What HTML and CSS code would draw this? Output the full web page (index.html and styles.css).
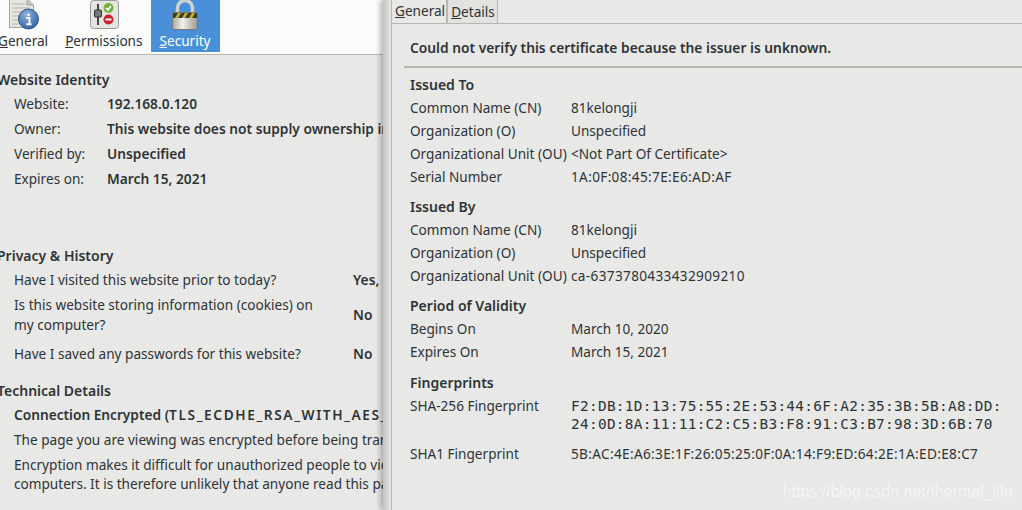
FILE: index.html
```html
<!DOCTYPE html>
<html lang="en">
<head>
    <meta charset="UTF-8">
    <title>Page Info</title>
    <link rel="stylesheet" href="styles.css">
</head>
<body>
    <div class="page-info">
        <div class="toolbar">
            <div class="tool">
                <svg class="tool-icon" viewBox="0 0 40 31" width="40" height="31">
                    <defs>
                        <radialGradient id="infoBall" cx="0.4" cy="0.3" r="0.8">
                            <stop offset="0" stop-color="#8db3e0"/>
                            <stop offset="1" stop-color="#2a5a9c"/>
                        </radialGradient>
                    </defs>
                    <path d="M6.500 -2H24L30.500 5V27.500H6.500Z" fill="#e6e6e0" stroke="#a5a5a0"/>
                    <path d="M24 -2V5H30.500" fill="#c9c9c2" stroke="#a5a5a0"/>
                    <path d="M9 4H22M9 8H27M9 12H27M9 16H20M9 20H18M9 24H16" stroke="#b5b5ae" stroke-width="1.2"/>
                    <circle cx="25.500" cy="19" r="10" fill="url(#infoBall)" stroke="#2d5487"/>
                    <path d="M25.500 13.500v2.500M23.300 18H26.500V24M23.300 24.300H28.500" stroke="#fff" stroke-width="2" fill="none"/>
                </svg>
                <span class="tool-label"><u>G</u>eneral</span>
            </div>
            <div class="tool">
                <svg class="tool-icon" viewBox="0 0 40 31" width="40" height="31">
                    <rect x="6.500" y="0.500" width="28" height="28" rx="3" fill="#e4e4e0" stroke="#9a9a96"/>
                    <path d="M14 4V25" stroke="#444" stroke-width="2"/>
                    <rect x="10.500" y="10" width="7" height="7" rx="1" fill="#777" stroke="#333"/>
                    <circle cx="24.500" cy="8" r="5" fill="#71b33c"/>
                    <path d="M22 8l2 2 3-4" stroke="#fff" stroke-width="1.6" fill="none"/>
                    <circle cx="24.500" cy="19.500" r="5" fill="#cc2030"/>
                    <path d="M21.500 19.500h6" stroke="#fff" stroke-width="2"/>
                </svg>
                <span class="tool-label"><u>P</u>ermissions</span>
            </div>
            <div class="tool tool-active">
                <svg class="tool-icon" viewBox="0 0 40 31" width="40" height="31">
                    <defs>
                        <linearGradient id="lockBody" x1="0" y1="0" x2="1" y2="0">
                            <stop offset="0" stop-color="#a8a8a0"/>
                            <stop offset="0.4" stop-color="#f2f2ec"/>
                            <stop offset="1" stop-color="#9a9a92"/>
                        </linearGradient>
                    </defs>
                    <path d="M12.500 13V8A7.500 7.500 0 0 1 27.500 8V13" fill="none" stroke="#d2d2cd" stroke-width="3.500"/>
                    <rect x="7.500" y="12.500" width="25" height="17" rx="2" fill="url(#lockBody)" stroke="#77776f"/>
                    <rect x="8" y="13" width="24" height="5" fill="#3f3c26"/>
                    <path d="M10 18l3-5h3l-3 5zM17 18l3-5h3l-3 5zM24 18l3-5h3l-3 5z" fill="#c8b13a"/>
                </svg>
                <span class="tool-label"><u>S</u>ecurity</span>
            </div>
        </div>

        <div class="sec sec-identity">
            <h3>Website Identity</h3>
            <div class="id-row"><span>Website:</span><b>192.168.0.120</b></div>
            <div class="id-row"><span>Owner:</span><b>This website does not supply ownership information.</b></div>
            <div class="id-row"><span>Verified by:</span><b>Unspecified</b></div>
            <div class="id-row"><span>Expires on:</span><b>March 15, 2021</b></div>
        </div>

        <div class="sec sec-privacy">
            <h3>Privacy &amp; History</h3>
            <div class="q-row q-first"><span>Have I visited this website prior to today?</span><b>Yes, once</b></div>
            <div class="q-row q-tall"><span>Is this website storing information (cookies) on my computer?</span><b>No</b></div>
            <div class="q-row q-last"><span>Have I saved any passwords for this website?</span><b>No</b></div>
        </div>

        <div class="sec sec-tech">
            <h3>Technical Details</h3>
            <p class="tech-head">Connection Encrypted (<span class="cipher">TLS_ECDHE_RSA_WITH_AES_128_GCM_SHA256</span>)</p>
            <p class="tech-one">The page you are viewing was encrypted before being transmitted over the Internet.</p>
            <p class="tech-two">Encryption makes it difficult for unauthorized people to view information traveling between<br>computers. It is therefore unlikely that anyone read this page as it traveled across the network.</p>
        </div>
    </div>

    <div class="cert-window">
        <div class="tabs">
            <div class="tab tab-active"><u>G</u>eneral</div>
            <div class="tab"><u>D</u>etails</div>
        </div>
        <div class="cert-panel">
            <div class="cert-warning">Could not verify this certificate because the issuer is unknown.</div>

            <h4>Issued To</h4>
            <div class="cert-row"><span>Common Name (CN)</span><span>81kelongji</span></div>
            <div class="cert-row"><span>Organization (O)</span><span>Unspecified</span></div>
            <div class="cert-row"><span>Organizational Unit (OU)</span><span>&lt;Not Part Of Certificate&gt;</span></div>
            <div class="cert-row"><span>Serial Number</span><span class="hex">1A:0F:08:45:7E:E6:AD:AF</span></div>

            <h4>Issued By</h4>
            <div class="cert-row"><span>Common Name (CN)</span><span>81kelongji</span></div>
            <div class="cert-row"><span>Organization (O)</span><span>Unspecified</span></div>
            <div class="cert-row"><span>Organizational Unit (OU)</span><span class="hex">ca-6373780433432909210</span></div>

            <h4>Period of Validity</h4>
            <div class="cert-row"><span>Begins On</span><span>March 10, 2020</span></div>
            <div class="cert-row"><span>Expires On</span><span>March 15, 2021</span></div>

            <h4 class="group-last">Fingerprints</h4>
            <div class="cert-row finger-row"><span>SHA-256 Fingerprint</span><span class="mono">F2:DB:1D:13:75:55:2E:53:44:6F:A2:35:3B:5B:A8:DD:<br>24:0D:8A:11:11:C2:C5:B3:F8:91:C3:B7:98:3D:6B:70</span></div>
            <div class="cert-row"><span>SHA1 Fingerprint</span><span class="hex">5B:AC:4E:A6:3E:1F:26:05:25:0F:0A:14:F9:ED:64:2E:1A:ED:E8:C7</span></div>
        </div>
        <div class="watermark">https://blog.csdn.net/thermal_life</div>
    </div>
</body>
</html>
```

FILE: styles.css
```css
html, body {
    margin: 0;
    padding: 0;
    height: 510px;
    overflow: hidden;
}
body {
    position: relative;
    font-family: "Noto Sans", "Open Sans", sans-serif;
    font-size: 13.6px;
    line-height: 20px;
    color: #2e3436;
    background-color: #e8e8e7;
}
.page-info {
    width: 383px;
    height: 510px;
    overflow: hidden;
}
.toolbar {
    display: flex;
    height: 54px;
    margin-left: -2px;
    background-color: #fbfbfb;
    border-bottom: 1px solid #b6b6b3;
}
.tool {
    display: flex;
    flex-direction: column;
    align-items: center;
    height: 52px;
    padding: 0 9px;
}
.tool:first-child {
    padding: 0 8px 0 0;
}
.tool:nth-child(2) {
    padding-right: 8px;
}
.tool-active {
    background-color: #4a90d9;
    color: #fff;
}
.tool-icon {
    display: block;
    flex: none;
}
.tool-label {
    line-height: 20px;
}
h3 {
    margin: 0;
    font-size: 14px;
    font-weight: 600;
    line-height: 20px;
}
b {
    font-size: 13.75px;
    font-weight: 600;
}
.sec {
    margin-left: -3px;
    white-space: nowrap;
}
.sec-identity {
    padding-top: 15px;
}
.sec-privacy {
    padding-top: 55px;
}
.sec-tech {
    padding-top: 14px;
}
.id-row {
    display: grid;
    grid-template-columns: 93px 1fr;
    height: 25px;
    line-height: 25px;
    padding-left: 17px;
}
.id-row:nth-child(2) {
    margin-top: 1px;
}
.q-row {
    display: grid;
    grid-template-columns: 339px 1fr;
    align-items: center;
    padding-left: 17px;
}
.q-row span {
    white-space: normal;
    width: 310px;
}
.q-first {
    height: 24px;
    margin-top: 2px;
}
.q-tall {
    height: 46px;
}
.q-last {
    height: 27px;
    margin-top: 2px;
}
.sec-tech p {
    margin: 0;
    padding-left: 17px;
}
.sec-tech .tech-head {
    font-size: 13.7px;
    font-weight: 600;
    margin-top: 4px;
}
.cipher {
    letter-spacing: 1.6px;
}
.sec-tech .tech-one {
    margin-top: 5px;
}
.sec-tech .tech-two {
    margin-top: 5px;
    line-height: 19px;
}

.cert-window {
    position: absolute;
    top: 0;
    left: 383px;
    width: 639px;
    height: 510px;
    background-color: #e8e8e7;
    background-image: linear-gradient(to right, #c4c4c2 0, #e4e4e3 8px, #e8e8e7 9px);
    box-shadow: -3px 0 5px rgba(0, 0, 0, 0.25);
    overflow: hidden;
}
.tabs {
    display: flex;
    height: 23px;
    margin-left: 8px;
    border-left: 1px solid #b6b6b3;
    border-bottom: 1px solid #b6b6b3;
}
.tab {
    padding: 0 1px 0 3px;
    height: 23px;
    line-height: 21px;
    border-right: 2px solid #b6b6b3;
    background-color: #eeeeed;
}
.tab-active {
    background-color: #e8e8e7;
}
.tab:last-child {
    border-right-width: 1px;
    padding-right: 2px;
    line-height: 23px;
    background-color: #e2e2e1;
}
.cert-panel {
    margin-left: 8px;
    height: 486px;
    padding-left: 12px;
    border-left: 1px solid #b6b6b3;
    white-space: nowrap;
}
.cert-warning {
    font-size: 13.8px;
    font-weight: 600;
    height: 20px;
    padding: 14px 0 8px 6px;
    border-bottom: 2px solid #b5b5b2;
}
h4 {
    margin: 7px 0 0;
    padding: 0 0 0 6px;
    height: 23px;
    font-size: 14px;
    font-weight: 600;
    line-height: 20px;
}
.group-last {
    margin-top: 8px;
}
.cert-row {
    display: grid;
    grid-template-columns: 161px 1fr;
    height: 23px;
    line-height: 20px;
    padding-left: 6px;
}
.hex {
    letter-spacing: 0.34px;
}
.finger-row {
    height: 48px;
}
.mono {
    font-family: "DejaVu Sans Mono", "Liberation Mono", monospace;
    font-size: 14.4px;
    letter-spacing: 0.31px;
    line-height: 18px;
    padding-top: 1px;
}
.watermark {
    position: absolute;
    right: 9px;
    bottom: 9px;
    font-family: "Liberation Sans", sans-serif;
    font-size: 16px;
    line-height: 18px;
    color: #fff;
    opacity: 0.55;
}
```
